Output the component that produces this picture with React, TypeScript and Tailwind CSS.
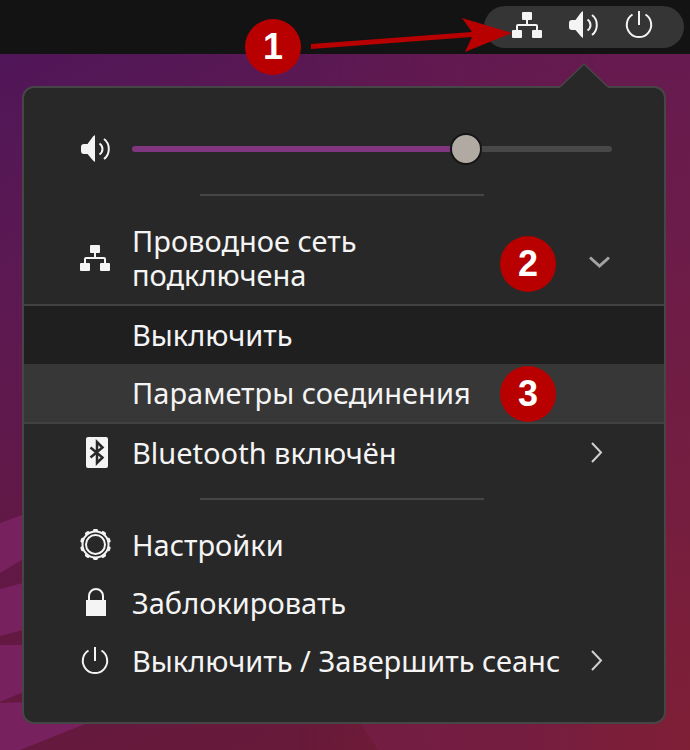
import React, { useState } from "react";

interface IconProps {
  className?: string;
}

function NetworkIcon({ className = "" }: IconProps) {
  return (
    <svg viewBox="0 0 32 32" className={`h-8 w-8 shrink-0 ${className}`} fill="currentColor" aria-hidden="true">
      <rect x="11" y="3" width="10" height="8" rx="1" />
      <rect x="1" y="21" width="10" height="8" rx="1" />
      <rect x="21" y="21" width="10" height="8" rx="1" />
      <path d="M16 10v6M6 22v-5q0-1 1-1h18q1 0 1 1v5" fill="none" stroke="currentColor" strokeWidth="2" />
    </svg>
  );
}

function VolumeIcon({ className = "" }: IconProps) {
  return (
    <svg viewBox="0 0 32 32" className={`h-8 w-8 shrink-0 ${className}`} fill="currentColor" aria-hidden="true">
      <path d="M2 14q0-3 3-3h3.500L14 3.500 16 2v27l-2-1.500L8.500 21H5q-3 0-3-3z" />
      <path d="M20.500 10.500q3 2 3 5.500t-3 5.500" fill="none" stroke="currentColor" strokeWidth="2" />
      <path d="M25 6q4.800 3.500 4.800 10T25 26" fill="none" stroke="currentColor" strokeWidth="2" />
    </svg>
  );
}

function PowerIcon({ className = "" }: IconProps) {
  return (
    <svg
      viewBox="0 0 32 32"
      className={`h-8 w-8 shrink-0 ${className}`}
      fill="none"
      stroke="currentColor"
      strokeWidth="2"
      aria-hidden="true"
    >
      <path d="M16 2v14" />
      <path d="M9.500 5.500a12.200 12.200 0 1 0 13 0" />
    </svg>
  );
}

function BluetoothIcon() {
  return (
    <svg viewBox="0 0 32 32" className="h-8 w-8 shrink-0" aria-hidden="true">
      <rect x="7" y="0" width="22" height="31" rx="2" fill="currentColor" />
      <path d="M11.500 10.500 23.500 20.500 18 26V5l5.500 5.500-12 10" fill="none" stroke="#282828" strokeWidth="2.500" />
    </svg>
  );
}

const TEETH = [0, 36, 72, 108, 144, 180, 216, 252, 288, 324];

function GearIcon() {
  return (
    <svg viewBox="0 0 32 32" className="h-8 w-8 shrink-0" aria-hidden="true">
      <g fill="none" stroke="currentColor" strokeWidth="2">
        <circle cx="16.500" cy="15.500" r="13" />
        <circle cx="16.500" cy="15.500" r="9.500" />
      </g>
      {TEETH.map((angle) => (
        <rect
          key={angle}
          x="14"
          y="0"
          width="5"
          height="3"
          rx="1.400"
          fill="currentColor"
          transform={`rotate(${angle} 16.500 15.500)`}
        />
      ))}
    </svg>
  );
}

function LockIcon() {
  return (
    <svg viewBox="0 0 32 32" className="h-8 w-8 shrink-0" aria-hidden="true">
      <rect x="7" y="13" width="20" height="16" fill="currentColor" />
      <path d="M10 13V9a7 7 0 0 1 14 0v4" fill="none" stroke="currentColor" strokeWidth="2" />
    </svg>
  );
}

function ChevronRight() {
  return (
    <svg viewBox="0 0 32 32" className="h-8 w-8 shrink-0 text-[#d0d0d0]" aria-hidden="true">
      <path d="m12 6 9 9.500-9 9.500" fill="none" stroke="currentColor" strokeWidth="2" />
    </svg>
  );
}

function ChevronDown() {
  return (
    <svg viewBox="0 0 32 32" className="h-8 w-8 shrink-0 text-[#a3a3a3]" aria-hidden="true">
      <path d="m10 15.500 9.500 8.500 9.500-8.500" fill="none" stroke="currentColor" strokeWidth="3" />
    </svg>
  );
}

function StepBadge({ step, className }: { step: number; className: string }) {
  return (
    <span
      className={`absolute flex h-14 w-14 items-center justify-center rounded-full bg-[#b90000] font-['Liberation_Sans',sans-serif] text-4xl font-bold text-white ${className}`}
    >
      {step}
    </span>
  );
}

function Separator() {
  return <hr className="my-4 mr-[180px] ml-44 border-t-2 border-[#464646]" />;
}

interface MenuRowProps {
  icon: React.ReactNode;
  label: string;
  hasSubmenu?: boolean;
}

function MenuRow({ icon, label, hasSubmenu }: MenuRowProps) {
  return (
    <button type="button" className="flex w-full items-center gap-[21px] py-3 pr-[52px] pl-[55px] text-left">
      {icon}
      <span className="min-w-0 flex-1 whitespace-nowrap">{label}</span>
      {hasSubmenu && <ChevronRight />}
    </button>
  );
}

function Wallpaper() {
  return (
    <svg
      viewBox="0 0 690 750"
      preserveAspectRatio="none"
      className="absolute inset-0 h-full w-full"
      aria-hidden="true"
    >
      <defs>
        <linearGradient id="sky" x1="0" y1="0" x2="0.500" y2="1">
          <stop offset="0" stopColor="#4d155a" />
          <stop offset="0.300" stopColor="#5c1952" />
          <stop offset="0.600" stopColor="#621845" />
          <stop offset="1" stopColor="#681a38" />
        </linearGradient>
        <linearGradient id="glow" x1="0" y1="0" x2="0" y2="1">
          <stop offset="0" stopColor="#651a52" />
          <stop offset="0.500" stopColor="#701d44" />
          <stop offset="1" stopColor="#7f1f36" />
        </linearGradient>
        <linearGradient id="fade" x1="0" y1="0" x2="1" y2="0">
          <stop offset="0" stopColor="#000" />
          <stop offset="0.800" stopColor="#fff" />
        </linearGradient>
        <mask id="right">
          <rect x="300" width="390" height="750" fill="url(#fade)" />
        </mask>
        <linearGradient id="ridge" x1="0" y1="0" x2="1" y2="0">
          <stop offset="0" stopColor="#741d43" />
          <stop offset="0.500" stopColor="#751d40" />
          <stop offset="1" stopColor="#7f1f36" />
        </linearGradient>
      </defs>
      <rect width="690" height="750" fill="url(#sky)" />
      <rect x="300" width="390" height="750" fill="url(#glow)" mask="url(#right)" />
      <path d="M355 715h310l25 35H378z" fill="url(#ridge)" />
      <g fill="#78215f">
        <path d="M0 523 30 512v43L0 573z" />
        <path d="M0 589 30 581v47L0 636z" />
        <path d="M0 645h30v44L0 702z" />
        <path d="M0 703 30 702 110 714 20 750H0z" />
      </g>
    </svg>
  );
}

export default function App() {
  const [volume, setVolume] = useState(71);

  return (
    <div className="relative isolate flex min-h-screen flex-col bg-[#5c1952] font-['Noto_Sans','Open_Sans',sans-serif] text-[29px] leading-[34px] text-[#f4f4f4]">
      <div className="absolute inset-0 -z-10">
        <Wallpaper />
      </div>

      {/* Top bar */}
      <header className="relative flex justify-end bg-[#131313] px-1.5 py-1.5">
        <button
          type="button"
          aria-label="Системное меню"
          className="flex h-[42px] items-start gap-6 rounded-full bg-[#353535] pt-[3px] pr-[29px] pl-[27px]"
        >
          <NetworkIcon />
          <VolumeIcon />
          <PowerIcon />
        </button>
        <StepBadge step={1} className="top-[19px] right-[389px]" />
        <svg viewBox="0 0 204 40" className="absolute top-[15px] right-[176px] h-10 w-[204px]" aria-hidden="true">
          <path d="m1 29 161-12-10-14 50 15-47 19 7-15L1 34z" fill="#b90000" />
        </svg>
      </header>

      {/* System menu */}
      <main className="relative mt-8 mr-6 ml-[22px] rounded-xl border-2 border-[#464646] bg-[#282828] py-8">
        <svg viewBox="0 0 48 26" className="absolute -top-[25px] right-14 h-[26px] w-12" aria-hidden="true">
          <path d="M0 24 24 1l24 23v2H0z" fill="#282828" />
          <path d="M0 24 24 1l24 23" fill="none" stroke="#464646" strokeWidth="1.500" />
        </svg>

        <label className="flex items-center gap-[21px] py-[13px] pr-[52px] pl-[55px]">
          <VolumeIcon />
          <input
            type="range"
            aria-label="Громкость"
            value={volume}
            onChange={(e) => setVolume(Number(e.target.value))}
            style={{ background: `linear-gradient(to right, #80357f ${volume}%, #484848 ${volume}%)` }}
            className="h-1.5 min-w-0 flex-1 appearance-none rounded-full [&::-webkit-slider-thumb]:h-8 [&::-webkit-slider-thumb]:w-8 [&::-webkit-slider-thumb]:appearance-none [&::-webkit-slider-thumb]:rounded-full [&::-webkit-slider-thumb]:border-2 [&::-webkit-slider-thumb]:border-[#151515] [&::-webkit-slider-thumb]:bg-[#b1aaa3]"
          />
        </label>

        <Separator />

        <div className="relative">
          <button
            type="button"
            aria-expanded="true"
            className="flex w-full items-center gap-[21px] py-3 pr-[52px] pl-[55px] text-left"
          >
            <NetworkIcon />
            <span className="flex-1">
              <span className="block max-w-64">Проводное сеть подключена</span>
            </span>
            <ChevronDown />
          </button>
          <StepBadge step={2} className="right-[108px] bottom-3" />
        </div>

        <div className="border-y-2 border-[#424242] bg-[#1f1f1f]">
          <button type="button" className="block w-full py-3 pl-[108px] text-left">
            Выключить
          </button>
          <div className="relative bg-[#373737]">
            <button type="button" className="block w-full py-3 pl-[108px] text-left">
              Параметры соединения
            </button>
            <StepBadge step={3} className="right-[108px] bottom-0" />
          </div>
        </div>

        <MenuRow icon={<BluetoothIcon />} label="Bluetooth включён" hasSubmenu />

        <Separator />

        <MenuRow icon={<GearIcon />} label="Настройки" />
        <MenuRow icon={<LockIcon />} label="Заблокировать" />
        <MenuRow icon={<PowerIcon />} label="Выключить / Завершить сеанс" hasSubmenu />
      </main>
    </div>
  );
}
